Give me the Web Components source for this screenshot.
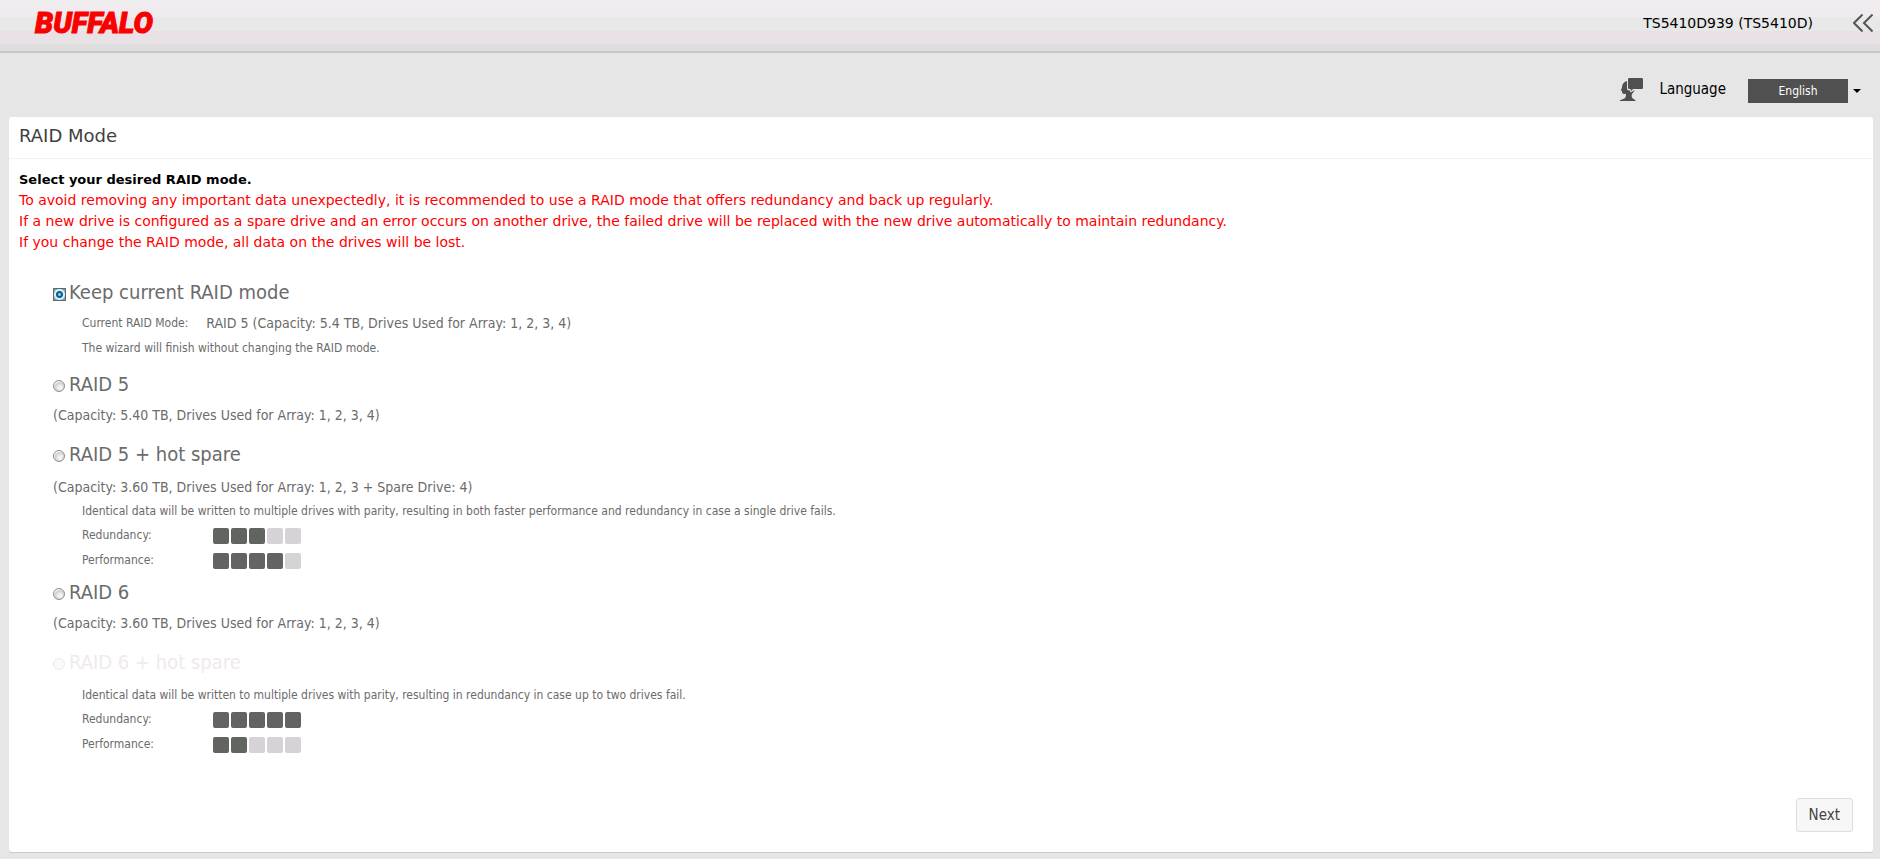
<!DOCTYPE html>
<html lang="en">
<head>
<meta charset="utf-8">
<title>RAID Mode</title>
<style>
  html, body { margin: 0; min-height: 100%; }
  body {
    background: #e6e6e6;
    color: #000;
    font-family: "DejaVu Sans", Verdana, sans-serif;
    --narrow: "DejaVu Sans Condensed", Tahoma, sans-serif;
    --muted: #6b6b6b;
  }
</style>
</head>
<body>
<nas-wizard>
  <nas-header slot="header" device="TS5410D939 (TS5410D)"></nas-header>
  <language-bar slot="tools"></language-bar>
  <wizard-panel heading="RAID Mode">
    <warning-text slot="intro">
      <span slot="lead">Select your desired RAID mode.</span>
      <span>To avoid removing any important data unexpectedly, it is recommended to use a RAID mode that offers redundancy and back up regularly.</span>
      <span>If a new drive is configured as a spare drive and an error occurs on another drive, the failed drive will be replaced with the new drive automatically to maintain redundancy.</span>
      <span>If you change the RAID mode, all data on the drives will be lost.</span>
    </warning-text>
    <raid-option class="current" name="Keep current RAID mode" checked>
      <detail-row label="Current RAID Mode:" value="RAID 5 (Capacity: 5.4 TB, Drives Used for Array: 1, 2, 3, 4)"></detail-row>
      <detail-row label="The wizard will finish without changing the RAID mode."></detail-row>
    </raid-option>
    <raid-option name="RAID 5" capacity="(Capacity: 5.40 TB, Drives Used for Array: 1, 2, 3, 4)"></raid-option>
    <raid-option name="RAID 5 + hot spare" capacity="(Capacity: 3.60 TB, Drives Used for Array: 1, 2, 3 + Spare Drive: 4)" note="Identical data will be written to multiple drives with parity, resulting in both faster performance and redundancy in case a single drive fails.">
      <rating-row label="Redundancy:" level="3"></rating-row>
      <rating-row label="Performance:" level="4"></rating-row>
    </raid-option>
    <raid-option name="RAID 6" capacity="(Capacity: 3.60 TB, Drives Used for Array: 1, 2, 3, 4)"></raid-option>
    <raid-option name="RAID 6 + hot spare" disabled note="Identical data will be written to multiple drives with parity, resulting in redundancy in case up to two drives fail.">
      <rating-row label="Redundancy:" level="5"></rating-row>
      <rating-row label="Performance:" level="2"></rating-row>
    </raid-option>
    <next-button slot="actions">Next</next-button>
  </wizard-panel>
</nas-wizard>

<script>
const define = (name, render, setup) =>
  customElements.define(name, class extends HTMLElement {
    connectedCallback() {
      if (this.shadowRoot) return;
      this.attachShadow({ mode: 'open' }).innerHTML = render(this);
      if (setup) setup(this);
    }
  });
const attr = (el, name) => el.getAttribute(name) || '';

define('nas-wizard', () => `
  <style>
    :host { display: flex; flex-direction: column; min-height: 100vh; }
    main { flex: 1; display: flex; flex-direction: column; padding: 0 7px 7px 9px; }
  </style>
  <slot name="header"></slot>
  <slot name="tools"></slot>
  <main><slot></slot></main>`);

define('nas-header', el => `
  <style>
    :host { display: block; }
    header {
      box-sizing: border-box; height: 53px; padding: 0 7px 5px 35px;
      display: flex; align-items: center; justify-content: space-between;
      border-bottom: 2px solid #c8c8c8;
      background: linear-gradient(#eeeeee 3px, #f0ebee 3px 17px, #e7e8e7 17px 31px, #e8e2e6 31px 44px, #dedede 44px);
    }
    .logo { color: #fa0000; font: italic 900 29px/34px Roboto, sans-serif; text-decoration: none; -webkit-text-stroke: 1px #fa0000; }
    .side { display: flex; align-items: center; gap: 40px; font-size: 14px; line-height: 20px; }
    button { border: 0; padding: 0; background: none; display: flex; }
    svg { display: block; }
  </style>
  <header>
    <a class="logo" href="#">BUFFALO</a>
    <div class="side">
      <span>${attr(el, 'device')}</span>
      <button type="button" aria-label="Open menu">
        <svg width="20" height="18" viewBox="0 0 20 18" fill="none" stroke="#555" stroke-width="2"><path d="M9.500 .5 1 9l8.500 8.500M19.500 .5 11 9l8.500 8.500"/></svg>
      </button>
    </div>
  </header>`);

define('language-bar', () => `
  <style>
    :host { box-sizing: border-box; display: flex; justify-content: flex-end; align-items: center; height: 64px; padding: 12px 19px 0 0; font-family: var(--narrow); }
    label { font-size: 15px; line-height: 20px; margin: 0 22px 4px 16px; }
    svg { display: block; }
    .person { margin-bottom: 3px; }
    select {
      appearance: none; width: 100px; height: 24px; padding: 0; border: 0; border-radius: 0;
      background: #505050; color: #fff; font: 12px/24px var(--narrow); text-align: center; text-align-last: center;
    }
    .caret { margin-left: 5px; }
  </style>
  <svg class="person" width="23" height="23" viewBox="0 0 23 23" fill="#505050">
    <path d="M7 3C3.500 4 2 6.500 2 9.500L.8 12.500l1.200.6.200 2.200 1.800.7 1.500-.2c1 1.200.5 3.200-1 4.700L0 22.300V23h15.500v-.7l-3-2c-1.500-1.500-1-4 .5-5.500l1.800-2.800-4.300 2.500-.5-2C8 12.500 7 12 7 10.500z"/>
    <path d="M9.500 0h12c1 0 1.500.5 1.500 1.500v8c0 1-.5 1.500-1.500 1.500H13l-2 2-.5-2h-1C8.500 11 8 10.500 8 9.500v-8C8 .5 8.500 0 9.500 0z"/>
  </svg>
  <label for="language">Language</label>
  <select id="language"><option>English</option></select>
  <svg class="caret" width="8" height="4" viewBox="0 0 8 4"><path d="M0 0h8L4 4z"/></svg>`);

define('wizard-panel', el => `
  <style>
    :host {
      flex: 1; display: flex; flex-direction: column; background: #fff;
      border-radius: 3px; box-shadow: 0 1px 0 #c8c8c8;
    }
    h1 {
      margin: 0; padding: 7px 10px 10px; border-bottom: 1px solid #f2f2f2;
      color: #404040; font-size: 18px; font-weight: 400; line-height: 24px;
    }
    .intro { padding: 10px 10px 0; }
    .options { padding: 27px 44px 0; }
    .actions { margin-top: auto; padding: 20px; display: flex; justify-content: flex-end; }
  </style>
  <h1>${attr(el, 'heading')}</h1>
  <div class="intro"><slot name="intro"></slot></div>
  <div class="options"><slot></slot></div>
  <div class="actions"><slot name="actions"></slot></div>`);

define('warning-text', () => `
  <style>
    :host { display: block; font-size: 14px; line-height: 21px; color: #f00; }
    ::slotted(span) { display: block; }
    .lead { color: #000; font-size: 13px; font-weight: 700; }
  </style>
  <div class="lead"><slot name="lead"></slot></div>
  <slot></slot>`);

define('raid-option', el => `
  <style>
    :host { display: block; margin-bottom: 15px; font-family: var(--narrow); color: var(--muted); }
    label { display: flex; align-items: center; gap: 4px; font-size: 20px; line-height: 24px; margin-bottom: 7px; }
    :host([note]) { margin-bottom: 7px; }
    :host([note]) label { margin-bottom: 9px; }
    :host(.current) { margin-bottom: 11px; }
    input {
      appearance: none; box-sizing: border-box; flex: none; width: 12px; height: 12px; margin: 4px 0 0;
      border: 1px solid #8e8f8f; border-radius: 50%;
      background: radial-gradient(circle at 60% 65%, #f4f4f4 15%, #cfd0d4 55%, #f6f6f6 70%);
    }
    input:checked {
      width: 13px; height: 13px; margin-right: -1px; border-color: #666; border-radius: 0;
      background: radial-gradient(circle, #6fd8fa 0 1px, #10598c 2px 3px, #dceef7 4px 5px, #75a8c4 6px);
    }
    :host([disabled]) label { color: #f0eaec; }
    input:disabled { border-color: #efe9ec; background: #fbf9fa; }
    p { margin: 0; line-height: 24px; }
    .capacity { font-size: 14px; }
    .note { font-size: 12px; padding-left: 29px; }
    .rows { padding-left: 29px; }
  </style>
  <label><input type="radio" ${el.hasAttribute('checked') ? 'checked' : ''} ${el.hasAttribute('disabled') ? 'disabled' : ''}><span>${attr(el, 'name')}</span></label>
  ${attr(el, 'capacity') ? `<p class="capacity">${attr(el, 'capacity')}</p>` : ''}
  ${attr(el, 'note') ? `<p class="note">${attr(el, 'note')}</p>` : ''}
  <div class="rows"><slot></slot></div>`,
  el => el.shadowRoot.querySelector('input').addEventListener('change', () => {
    for (const other of el.parentElement.querySelectorAll('raid-option'))
      if (other !== el) other.shadowRoot.querySelector('input').checked = false;
  }));

define('detail-row', el => `
  <style>
    :host { display: flex; gap: 18px; font-size: 12px; line-height: 25px; }
    .value { font-size: 14px; }
  </style>
  <span>${attr(el, 'label')}</span>
  ${attr(el, 'value') ? `<span class="value">${attr(el, 'value')}</span>` : ''}`);

define('rating-row', el => `
  <style>
    :host { display: grid; grid-template-columns: 131px auto; justify-content: start; align-items: center; font-size: 12px; line-height: 25px; }
    .meter { display: flex; gap: 2px; }
    i { width: 16px; height: 16px; border-radius: 2px; background: #d5d3d6; }
    i.on { background: #626461; }
  </style>
  <span>${attr(el, 'label')}</span>
  <div class="meter">${[1, 2, 3, 4, 5].map(n => `<i class="${n <= +attr(el, 'level') ? 'on' : ''}"></i>`).join('')}</div>`);

define('next-button', () => `
  <style>
    :host { display: block; }
    button {
      display: block; padding: 6px 12px; border: 1px solid #ddd; border-radius: 3px;
      background: #f7f7f7; color: #444; font: 15px/20px var(--narrow);
    }
  </style>
  <button type="button"><slot></slot></button>`);
</script>
</body>
</html>
